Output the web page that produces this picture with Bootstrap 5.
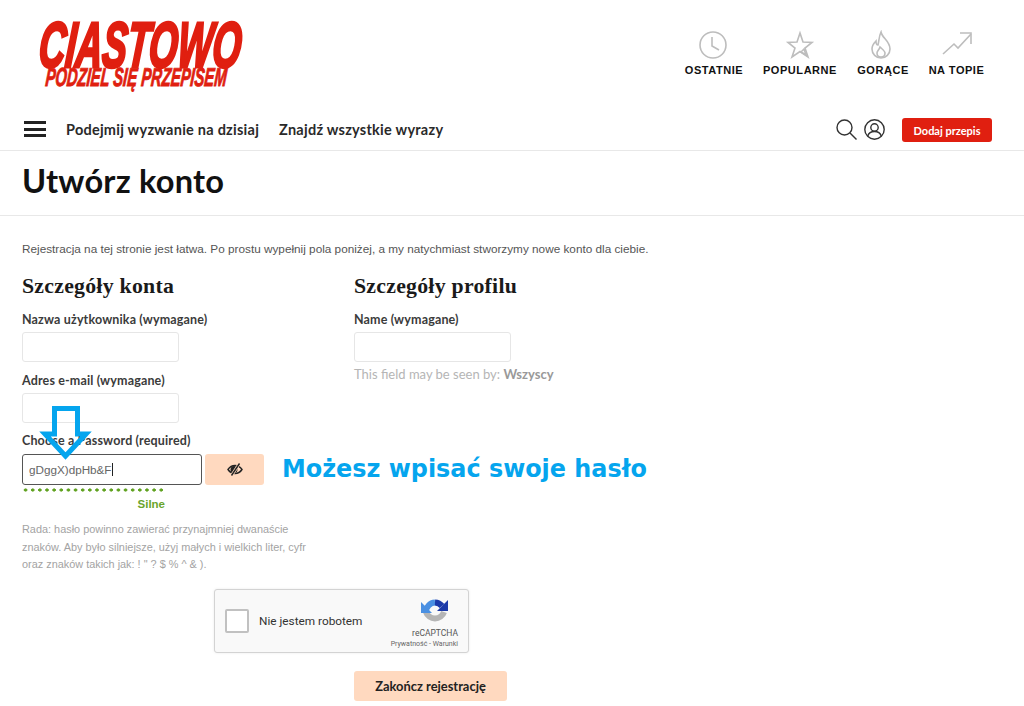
<!DOCTYPE html>
<html lang="pl">
<head>
<meta charset="utf-8">
<title>Ciastowo</title>
<link href="https://cdn.jsdelivr.net/npm/bootstrap@5.3.0/dist/css/bootstrap.min.css" rel="stylesheet">
<style>
html,body{height:706px;overflow:hidden;background:#fff}
body{font-family:"Liberation Sans",Arial,sans-serif;color:#222}
.top-zone{height:104px;padding:0 29px 0 38px}
.brand-box{width:206px;height:74px;margin-top:17px;overflow:visible}
.brand-main{font:italic 700 64px "Liberation Sans",sans-serif;fill:#e01f10;stroke:#e01f10;stroke-width:3.2px}
.brand-sub{font:italic 700 26px "Liberation Sans",sans-serif;fill:#e01f10;stroke:#e01f10;stroke-width:1px}
.trend-links{margin-top:30px;gap:0}
.trend-item{display:flex;flex-direction:column;align-items:center;font-size:11px;font-weight:700;color:#111;letter-spacing:.55px;line-height:13px;text-decoration:none}
.trend-item svg{display:block;margin-bottom:4px}
.nav-zone{height:47px;border-bottom:1px solid #e8e8e8;padding:4px 32px 0 24px}
.burger{width:22px;height:16px;border-top:3px solid #222;border-bottom:3px solid #222;position:relative;margin-right:20px}
.burger::after{content:"";position:absolute;left:0;right:0;top:3.5px;height:3px;background:#222}
.nav-link-x{font:700 14.5px Lato,sans-serif;color:#2a2a2a;text-decoration:none;margin-right:20px;letter-spacing:.25px}
.add-btn{background:#e01f10;color:#fff;font:700 11px Lato,sans-serif;border-radius:3px;border:0;width:90px;height:24px;padding:0;margin:2px 0 0 17px}
.title-zone{height:65px;border-bottom:1px solid #e8e8e8;padding-left:22px}
.title-zone h1{font:700 32.6px/59px Lato,sans-serif;color:#111;margin:0;letter-spacing:.2px}
.body-zone{padding:25px 22px 0}
.intro-text{font-size:11.77px;line-height:15px;color:#555;margin:0 0 18px}
.col-a{width:332px}
.sect-title{font:700 21.8px/24px "Liberation Serif",serif;color:#1a1a1a;margin:0 0 15px;letter-spacing:.25px}
.field-label{display:block;font:700 12.5px/14px Lato,sans-serif;color:#3b3b3b;margin:0 0 5px;letter-spacing:.15px}
.plain-input{display:block;width:157px;height:30px;border:1px solid #e6e6e6;border-radius:3px;background:#fff;margin-bottom:12px}
.see-note{font:400 13px/16px Lato,sans-serif;color:#b5b5b5;margin:-8px 0 0}
.see-note b{color:#999}
.pw-label{margin:-1px 0 6px}
.pw-row{height:31px;position:relative}
.pw-input{width:180px;height:31px;border:1px solid #555;border-radius:3px;font-size:11.7px;line-height:29px;color:#666;padding-left:6px;white-space:nowrap}
.caret-bar{display:inline-block;width:1px;height:13px;background:#222;vertical-align:-2px}
.eye-btn{width:59px;height:31px;margin-left:3px;background:#ffd9bf;border:0;border-radius:3px;padding:0;display:flex;align-items:center;justify-content:center}
.hint-call{font:700 23.9px/31px "DejaVu Sans",sans-serif;color:#05a5ee;margin-left:18px;white-space:nowrap}
.arrow-over{position:absolute;left:17px;top:-48px;overflow:visible;pointer-events:none}
.dot-line{width:143px;height:4px;margin-top:3px;background-image:radial-gradient(circle,#5fa11f 1.4px,transparent 1.8px);background-size:7.15px 4px;background-repeat:repeat-x}
.strength-text{width:143px;text-align:right;font-size:11.5px;font-weight:700;color:#6aa52c;line-height:14px;margin-top:5px}
.tip-text{width:295px;font-size:10.9px;line-height:17.6px;color:#a3a3a3;margin:10px 0 0}
.captcha-box{width:255px;height:64px;margin:15px 0 0 192px;background:#f9f9f9;border:1px solid #d3d3d3;border-radius:3px;box-shadow:0 0 3px rgba(0,0,0,.08);padding:0 10px;position:relative}
.captcha-check{width:24px;height:24px;background:#fff;border:2px solid #c1c1c1;border-radius:2px;margin-right:10px}
.captcha-label{font:400 11.8px Roboto,sans-serif;color:#333}
.captcha-side{position:absolute;right:10px;top:8px;width:70px;display:flex;flex-direction:column;align-items:flex-end}
.captcha-side svg{margin-right:9px}
.captcha-side span{font:400 8.5px/10px Roboto,sans-serif;color:#555;margin-top:2px}
.captcha-side small{font:400 7px/9px Roboto,sans-serif;color:#666;margin-top:2px;white-space:nowrap}
.finish-btn{display:block;width:153px;height:30px;margin:18px 0 0 332px;background:#ffd9bf;border:0;border-radius:3px;font:700 12.9px Lato,sans-serif;color:#222;padding:0}
</style>
</head>
<body>
<header class="top-zone d-flex justify-content-between align-items-start">
  <svg class="brand-box" viewBox="0 0 206 74" role="img" aria-label="Ciastowo">
    <text class="brand-main" x="4" y="50" textLength="202" lengthAdjust="spacingAndGlyphs" transform="skewX(-5)">CIASTOWO</text>
    <text class="brand-sub" x="13" y="69" textLength="181" lengthAdjust="spacingAndGlyphs" transform="skewX(-5)">PODZIEL SIĘ PRZEPISEM</text>
  </svg>
  <nav class="trend-links d-flex">
    <a class="trend-item" href="#" style="width:76px"><svg width="30" height="30" viewBox="0 0 30 30" fill="none" stroke="#bdbdbd" stroke-width="1.6"><circle cx="14" cy="15" r="13"/><path d="M13 7v9l7 4"/></svg>OSTATNIE</a>
    <a class="trend-item" href="#" style="width:96px"><svg width="30" height="30" viewBox="0 0 30 30" fill="none" stroke="#bdbdbd" stroke-width="1.6"><path d="M15 3l3 9 9 .5-7 5.500 3 9-8-5.500L7 27l3-9-7-5.500 9-.5z"/><path d="M19 19l-3 3 5 3z"/></svg>POPULARNE</a>
    <a class="trend-item" href="#" style="width:70px"><svg width="30" height="30" viewBox="0 0 30 30" fill="none" stroke="#bdbdbd" stroke-width="1.6"><path d="M13 2c1 6 9 9 9 17a9 9 0 0 1-18 0c0-4 2-6 4-8 0 3 1 4 2 4 1-4 1-9 3-13z"/><path d="M13 27c-3 0-4-2-4-4s2-3 3-6c2 2 5 4 5 6s-1 4-4 4z"/></svg>GORĄCE</a>
    <a class="trend-item" href="#" style="width:77px"><svg width="30" height="30" viewBox="0 0 30 30" fill="none" stroke="#bdbdbd" stroke-width="1.6"><path d="M1 24l11-10 4 4L29 4"/><path d="M18 3h11v11"/></svg>NA TOPIE</a>
  </nav>
</header>
<nav class="nav-zone d-flex align-items-center">
  <div class="burger"></div>
  <a class="nav-link-x" href="#">Podejmij wyzwanie na dzisiaj</a>
  <a class="nav-link-x" href="#">Znajdź wszystkie wyrazy</a>
  <div class="ms-auto d-flex align-items-center">
    <svg style="margin-right:7px" width="21" height="21" viewBox="0 0 21 21" fill="none" stroke="#333" stroke-width="1.4"><circle cx="8.500" cy="8.500" r="7.500"/><path d="M14 14l6.500 6.500"/></svg>
    <svg width="21" height="21" viewBox="0 0 21 21" fill="none" stroke="#333" stroke-width="1.4"><circle cx="10.500" cy="10.500" r="9.700"/><circle cx="10.500" cy="8.500" r="3.700"/><path d="M3.800 17c1-3.500 4-4.500 6.700-4.500s5.700 1 6.700 4.500"/></svg>
    <button class="add-btn" type="button">Dodaj przepis</button>
  </div>
</nav>
<div class="title-zone"><h1>Utwórz konto</h1></div>
<main class="body-zone">
  <p class="intro-text">Rejestracja na tej stronie jest łatwa. Po prostu wypełnij pola poniżej, a my natychmiast stworzymy nowe konto dla ciebie.</p>
  <div class="d-flex">
    <div class="col-a">
      <h2 class="sect-title">Szczegóły konta</h2>
      <label class="field-label">Nazwa użytkownika (wymagane)</label>
      <div class="plain-input"></div>
      <label class="field-label">Adres e-mail (wymagane)</label>
      <div class="plain-input"></div>
    </div>
    <div>
      <h2 class="sect-title">Szczegóły profilu</h2>
      <label class="field-label">Name (wymagane)</label>
      <div class="plain-input"></div>
      <p class="see-note">This field may be seen by: <b>Wszyscy</b></p>
    </div>
  </div>
  <label class="field-label pw-label">Choose a Password (required)</label>
  <div class="pw-row d-flex align-items-center">
    <div class="pw-input">gDggX)dpHb&amp;F<span class="caret-bar"></span></div>
    <button class="eye-btn" type="button" aria-label="Pokaż hasło"><svg width="16" height="13" viewBox="0 0 16 13" fill="none" stroke="#222" stroke-width="1.4"><path d="M1 6.500C3 3.500 5.500 2.500 8 2.500s5 1 7 4c-2 3-4.500 4-7 4s-5-1-7-4z"/><circle cx="7" cy="6.500" r="2.800" fill="#222"/><path d="M12.500 .5L4.500 12.500" stroke="#ffd9bf" stroke-width="3"/><path d="M12.500 .5L4.500 12.500"/></svg></button>
    <span class="hint-call">Możesz wpisać swoje hasło</span>
    <svg class="arrow-over" width="54" height="54" viewBox="0 0 54 54" fill="none" stroke="#05a5ee" stroke-width="5"><path d="M15.500 2.500H38.500V28H47L26.500 50 6 28H15.500z"/></svg>
  </div>
  <div class="dot-line"></div>
  <div class="strength-text">Silne</div>
  <p class="tip-text">Rada: hasło powinno zawierać przynajmniej dwanaście znaków. Aby było silniejsze, użyj małych i wielkich liter, cyfr oraz znaków takich jak: ! " ? $ % ^ &amp; ).</p>
  <div class="captcha-box d-flex align-items-center">
    <div class="captcha-check"></div>
    <span class="captcha-label">Nie jestem robotem</span>
    <div class="captcha-side">
      <svg width="28" height="28" viewBox="0 0 28 28" fill="none" stroke-width="6"><path d="M5 14A9.500 9.500 0 0 1 14 4.500" stroke="#4a90e2"/><path d="M14 4.500A9.500 9.500 0 0 1 21 8" stroke="#1c3aa9"/><path d="M5 14a9.500 9.500 0 0 0 18 0" stroke="#b5b5b5"/><path d="M0 3v11h11z" fill="#4a90e2" transform="translate(0 1)"/><path d="M27 2v11H16z" fill="#1c3aa9"/></svg>
      <span>reCAPTCHA</span>
      <small>Prywatność - Warunki</small>
    </div>
  </div>
  <button class="finish-btn" type="button">Zakończ rejestrację</button>
</main>
</body>
</html>
